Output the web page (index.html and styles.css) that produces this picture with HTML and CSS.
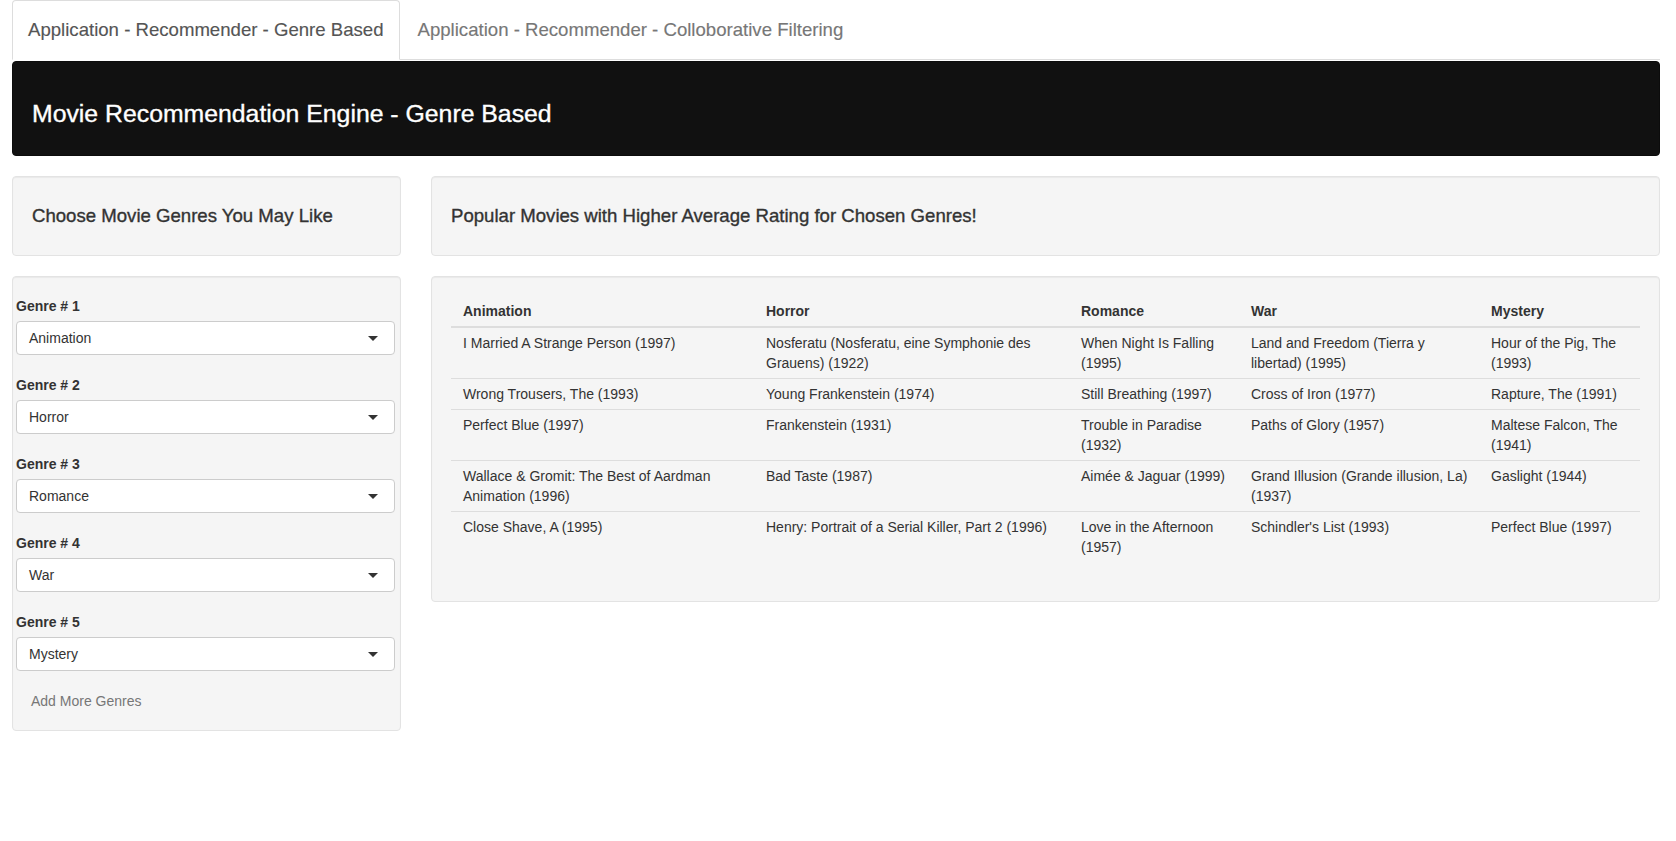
FILE: index.html
```html
<!DOCTYPE html>
<html lang="en">
<head>
<meta charset="utf-8">
<title>Movie Recommendation Engine</title>
<link rel="stylesheet" href="styles.css">
</head>
<body>
<div class="page">
  <ul class="tabs">
    <li class="tab active"><a>Application - Recommender - Genre Based</a></li>
    <li class="tab"><a>Application - Recommender - Colloborative Filtering</a></li>
  </ul>

  <div class="hero">
    <h2 class="hero-title">Movie Recommendation Engine - Genre Based</h2>
  </div>

  <div class="layout">
    <div class="side">
      <div class="well">
        <h4 class="well-title">Choose Movie Genres You May Like</h4>
      </div>
      <div class="well genres">
        <div class="field">
          <label class="field-label">Genre # 1</label>
          <div class="select"><span>Animation</span><span class="caret"></span></div>
        </div>
        <div class="field">
          <label class="field-label">Genre # 2</label>
          <div class="select"><span>Horror</span><span class="caret"></span></div>
        </div>
        <div class="field">
          <label class="field-label">Genre # 3</label>
          <div class="select"><span>Romance</span><span class="caret"></span></div>
        </div>
        <div class="field">
          <label class="field-label">Genre # 4</label>
          <div class="select"><span>War</span><span class="caret"></span></div>
        </div>
        <div class="field">
          <label class="field-label">Genre # 5</label>
          <div class="select"><span>Mystery</span><span class="caret"></span></div>
        </div>
        <div class="more">Add More Genres</div>
      </div>
    </div>

    <div class="main">
      <div class="well">
        <h4 class="well-title">Popular Movies with Higher Average Rating for Chosen Genres!</h4>
      </div>
      <div class="well">
        <table class="movies">
          <colgroup>
            <col class="c1"><col class="c2"><col class="c3"><col class="c4"><col class="c5">
          </colgroup>
          <thead>
            <tr><th>Animation</th><th>Horror</th><th>Romance</th><th>War</th><th>Mystery</th></tr>
          </thead>
          <tbody>
            <tr>
              <td>I Married A Strange Person (1997)</td>
              <td>Nosferatu (Nosferatu, eine Symphonie des Grauens) (1922)</td>
              <td>When Night Is Falling (1995)</td>
              <td>Land and Freedom (Tierra y libertad) (1995)</td>
              <td>Hour of the Pig, The (1993)</td>
            </tr>
            <tr>
              <td>Wrong Trousers, The (1993)</td>
              <td>Young Frankenstein (1974)</td>
              <td>Still Breathing (1997)</td>
              <td>Cross of Iron (1977)</td>
              <td>Rapture, The (1991)</td>
            </tr>
            <tr>
              <td>Perfect Blue (1997)</td>
              <td>Frankenstein (1931)</td>
              <td>Trouble in Paradise (1932)</td>
              <td>Paths of Glory (1957)</td>
              <td>Maltese Falcon, The (1941)</td>
            </tr>
            <tr>
              <td>Wallace &amp; Gromit: The Best of Aardman Animation (1996)</td>
              <td>Bad Taste (1987)</td>
              <td>Aimée &amp; Jaguar (1999)</td>
              <td>Grand Illusion (Grande illusion, La) (1937)</td>
              <td>Gaslight (1944)</td>
            </tr>
            <tr>
              <td>Close Shave, A (1995)</td>
              <td>Henry: Portrait of a Serial Killer, Part 2 (1996)</td>
              <td>Love in the Afternoon (1957)</td>
              <td>Schindler's List (1993)</td>
              <td>Perfect Blue (1997)</td>
            </tr>
          </tbody>
        </table>
      </div>
    </div>
  </div>
</div>
</body>
</html>
```

FILE: styles.css
```css
* { box-sizing: border-box; }

html, body {
  margin: 0;
  padding: 0;
  background: #ffffff;
}

body {
  font-family: "Liberation Sans", Arial, Helvetica, sans-serif;
  font-size: 14px;
  line-height: 20px;
  color: #333333;
}

.page {
  padding: 0 16px 0 12px;
}

/* ---------- tabs ---------- */
.tabs {
  list-style: none;
  margin: 0;
  padding: 0;
  display: flex;
  border-bottom: 1px solid #dddddd;
  height: 60px;
}

.tab {
  margin: 0 2px -1px 0;
}

.tab a {
  display: block;
  padding: 19px 15px;
  line-height: 20px;
  font-size: 18.6px;
  color: #777777;
  border: 1px solid transparent;
  border-radius: 4px 4px 0 0;
  cursor: pointer;
  -webkit-text-stroke: 0.15px currentColor;
}

.tab.active a {
  color: #555555;
  background: #ffffff;
  border-color: #dddddd;
  border-bottom-color: transparent;
}

/* ---------- hero ---------- */
.hero {
  margin-top: 1px;
  margin-bottom: 20px;
  background: #111111;
  border: 1px solid #0c0c0c;
  border-radius: 4px;
  padding: 19px 19px 20px;
}

.hero-title {
  margin: 20px 0 8px;
  font-size: 24.8px;
  line-height: 26px;
  font-weight: normal;
  color: #ffffff;
  -webkit-text-stroke: 0.35px currentColor;
}

/* ---------- layout ---------- */
.layout {
  display: grid;
  grid-template-columns: 389px 1fr;
  column-gap: 30px;
  align-items: start;
}

.well {
  background: #f5f5f5;
  border: 1px solid #e3e3e3;
  border-radius: 4px;
  box-shadow: inset 0 1px 1px rgba(0, 0, 0, 0.05);
  padding: 19px;
  margin-bottom: 20px;
}

.well-title {
  margin: 10px 0;
  font-size: 18.6px;
  line-height: 20px;
  font-weight: normal;
  color: #333333;
  -webkit-text-stroke: 0.35px currentColor;
}

/* ---------- genre selects ---------- */
.genres {
  padding: 19px 5px 19px 3px;
}

.field {
  margin-bottom: 20px;
}

.field-label {
  display: block;
  font-weight: bold;
  margin-bottom: 5px;
}

.select {
  display: flex;
  align-items: center;
  justify-content: space-between;
  height: 34px;
  padding: 6px 16px 6px 12px;
  background: #ffffff;
  border: 1px solid #cccccc;
  border-radius: 4px;
  color: #333333;
}

.caret {
  width: 0;
  height: 0;
  border-top: 5px solid #333333;
  border-left: 5px solid transparent;
  border-right: 5px solid transparent;
}

.more {
  padding-left: 15px;
  color: #777777;
}

/* ---------- table ---------- */
.movies {
  width: 100%;
  table-layout: fixed;
  border-collapse: collapse;
  margin-bottom: 20px;
}

.movies .c1 { width: 303px; }
.movies .c2 { width: 315px; }
.movies .c3 { width: 170px; }
.movies .c4 { width: 240px; }
.movies .c5 { width: auto; }

.movies th,
.movies td {
  text-align: left;
  vertical-align: top;
  padding: 5px 6px 5px 12px;
  line-height: 20px;
}

.movies th {
  font-weight: bold;
  border-bottom: 2px solid #dddddd;
}

.movies tbody tr + tr td {
  border-top: 1px solid #dddddd;
}
```
